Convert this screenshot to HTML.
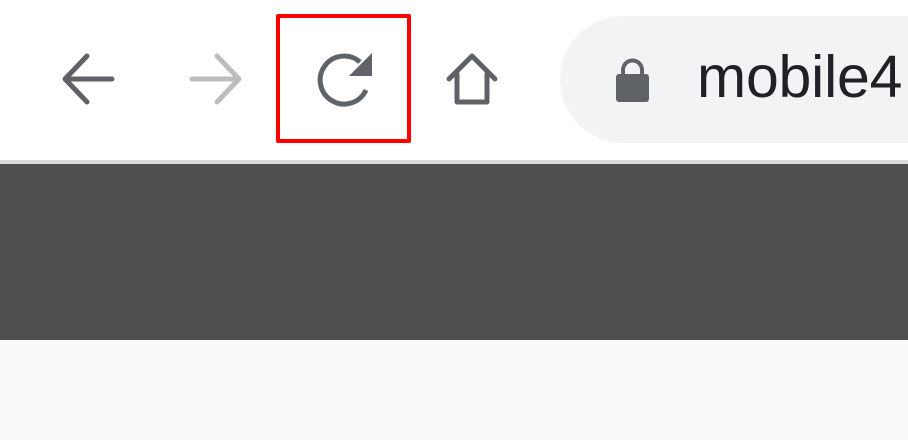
<!DOCTYPE html>
<html><head><meta charset="utf-8"><style>
html,body{margin:0;padding:0;width:908px;height:440px;overflow:hidden;background:#f9f9f9;font-family:"Liberation Sans",sans-serif}
.top{position:absolute;left:0;top:0;width:908px;height:160px;background:#fff}
.line{position:absolute;left:0;top:160px;width:908px;height:4px;background:#dcdcdc}
.dark{position:absolute;left:0;top:164px;width:908px;height:176px;background:#505050}
.pill{position:absolute;left:560px;top:16px;width:420px;height:127px;border-radius:64px;background:#f1f3f4}
.url{position:absolute;left:697px;top:47px;font-size:59px;color:#202124;line-height:60px;letter-spacing:-0.2px}
.red{position:absolute;left:276px;top:14px;width:127px;height:121px;border:4px solid #f00;border-radius:2px}
svg{position:absolute;left:0;top:0}
</style></head><body>
<div class="top"></div>
<div class="line"></div>
<div class="dark"></div>
<div class="pill"></div>
<div class="url">mobile4</div>
<div class="red"></div>
<svg width="908" height="160" viewBox="0 0 908 160">
<g fill="none" stroke="#5f6368" stroke-width="5" stroke-linecap="round" stroke-linejoin="round">
<path d="M65,79 H112 M87,56 L65,79 L87,102"/>
<path d="M360,62 A24,24 0 1 0 366,90" stroke-linecap="butt"/>
<path d="M449,79 L472,56 L495,79 M457,74 V102 H487 V74"/>
</g>
<g fill="none" stroke="#bdbdbd" stroke-width="5" stroke-linecap="round" stroke-linejoin="round">
<path d="M192,79 H239 M217,56 L239,79 L217,102"/>
</g>
<path d="M372,53 V76 H349 Z" fill="#5f6368"/>
<rect x="616" y="74" width="33" height="28" rx="3" fill="#5f6368"/>
<path d="M623,75 V70 A9.5,9.5 0 0 1 642,70 V75" fill="none" stroke="#5f6368" stroke-width="4"/>
</svg>
</body></html>
